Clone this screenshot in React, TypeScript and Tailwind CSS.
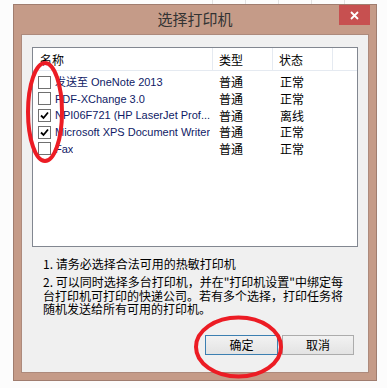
import React from "react";

const printers = [
  { name: "发送至 OneNote 2013", type: "普通", status: "正常", checked: false },
  { name: "PDF-XChange 3.0", type: "普通", status: "正常", checked: false },
  { name: "NPI06F721 (HP LaserJet Prof...", type: "普通", status: "离线", checked: true },
  { name: "Microsoft XPS Document Writer", type: "普通", status: "正常", checked: true },
  { name: "Fax", type: "普通", status: "正常", checked: false },
];

const font = "font-['Tahoma','Liberation_Sans','Noto_Sans_CJK_SC',sans-serif]";

const CheckBox: React.FC<{ checked: boolean }> = ({ checked }) => (
  <div className="w-[13px] h-[13px] border border-[#707070] bg-white flex items-center justify-center shrink-0">
    {checked && (
      <svg width="9" height="9" viewBox="0 0 9 9">
        <path d="M1 4.5 L3.5 7 L8 1.5" stroke="#000" strokeWidth="1.8" fill="none" />
      </svg>
    )}
  </div>
);

const App: React.FC = () => {
  return (
    <div className={`relative w-[387px] h-[388px] bg-[#fcfcfc] overflow-hidden ${font}`}>
      {/* desktop grid lines peeking at the top */}
      <div className="h-[4px] relative">
        <div className="absolute left-[212px] top-0 w-px h-[4px] bg-[#e2e2e2]" />
        <div className="absolute left-[245px] top-0 w-px h-[4px] bg-[#e2e2e2]" />
        <div className="absolute left-[278px] top-0 w-px h-[4px] bg-[#e2e2e2]" />
        <div className="absolute left-[311px] top-0 w-px h-[4px] bg-[#e2e2e2]" />
        <div className="absolute left-[344px] top-0 w-px h-[4px] bg-[#e2e2e2]" />
      </div>

      {/* window */}
      <div className="ml-[13px] w-[364px] h-[377px] border border-[#a07d6f] bg-[#c59b88] flex flex-col">
        <div className="h-[29px] relative flex items-center justify-center">
          <span className="text-[15px] text-[#333333] font-['Noto_Sans_CJK_SC',sans-serif]">选择打印机</span>
          <div className="absolute right-[6px] top-0 w-[31px] h-[20px] bg-[#c75050] flex items-center justify-center">
            <svg width="9" height="9" viewBox="0 0 9 9">
              <path d="M1 1 L8 8 M8 1 L1 8" stroke="#fff" strokeWidth="1.8" />
            </svg>
          </div>
        </div>

        {/* client area */}
        <div className="mx-[7px] h-[339px] bg-[#f0f0f0] border border-[#ad8a7c] flex flex-col">
          {/* list view */}
          <div className="ml-[10px] mt-[12px] w-[326px] h-[200px] border border-[#828790] bg-white flex flex-col">
            <div className="h-[23px] flex border-b border-[#e5eaf1] text-[12px] text-black font-['Noto_Sans_CJK_SC',sans-serif]">
              <div className="w-[180px] pl-[7px] pt-[1px] flex items-center border-r border-[#e5eaf1]">名称</div>
              <div className="w-[60px] pl-[6px] pt-[1px] flex items-center border-r border-[#e5eaf1]">类型</div>
              <div className="w-[60px] pl-[6px] pt-[1px] flex items-center border-r border-[#e5eaf1]">状态</div>
            </div>
            <div className="pt-[3px]">
              {printers.map((p) => (
                <div key={p.name} className="h-[16.67px] flex items-center text-[12px]">
                  <div className="w-[180px] flex items-center pl-[5px] overflow-hidden">
                    <CheckBox checked={p.checked} />
                    <span className="ml-[4px] text-[11px] text-[#0f1a66] whitespace-nowrap overflow-hidden font-['Liberation_Sans','Noto_Sans_CJK_SC',sans-serif]">
                      {p.name}
                    </span>
                  </div>
                  <div className="w-[61px] pl-[6px] text-black font-['Noto_Sans_CJK_SC',sans-serif]">{p.type}</div>
                  <div className="w-[60px] pl-[6px] text-black font-['Noto_Sans_CJK_SC',sans-serif]">{p.status}</div>
                </div>
              ))}
            </div>
          </div>

          {/* notes */}
          <div className="ml-[21px] mt-[10px] text-[12px] leading-[13.5px] text-black font-['Noto_Sans_CJK_SC',sans-serif]">
            <div>1. 请务必选择合法可用的热敏打印机</div>
            <div className="mt-[4.5px]">
              2. 可以同时选择多台打印机，并在"打印机设置"中绑定每
              <br />
              台打印机可打印的快递公司。若有多个选择，打印任务将
              <br />
              随机发送给所有可用的打印机。
            </div>
          </div>

          {/* buttons */}
          <div className="mt-auto mb-[17px] mr-[14px] flex justify-end gap-[4px] text-[12px] font-['Noto_Sans_CJK_SC',sans-serif]">
            <button className="w-[73px] h-[20px] border border-[#3c7fb1] bg-gradient-to-b from-[#f2f2f2] to-[#e3e3e3] text-black flex items-center justify-center">
              确定
            </button>
            <button className="w-[72px] h-[20px] border border-[#acacac] bg-gradient-to-b from-[#f2f2f2] to-[#e3e3e3] text-black flex items-center justify-center">
              取消
            </button>
          </div>
        </div>
      </div>

      {/* red markup ellipses */}
      <svg className="absolute inset-0 pointer-events-none" width="387" height="388">
        <ellipse cx="45" cy="112" rx="17" ry="49" fill="none" stroke="#ec1c24" strokeWidth="4" />
        <ellipse cx="238.5" cy="347" rx="42.5" ry="29.5" fill="none" stroke="#ec1c24" strokeWidth="4" />
      </svg>
    </div>
  );
};

export default App;
